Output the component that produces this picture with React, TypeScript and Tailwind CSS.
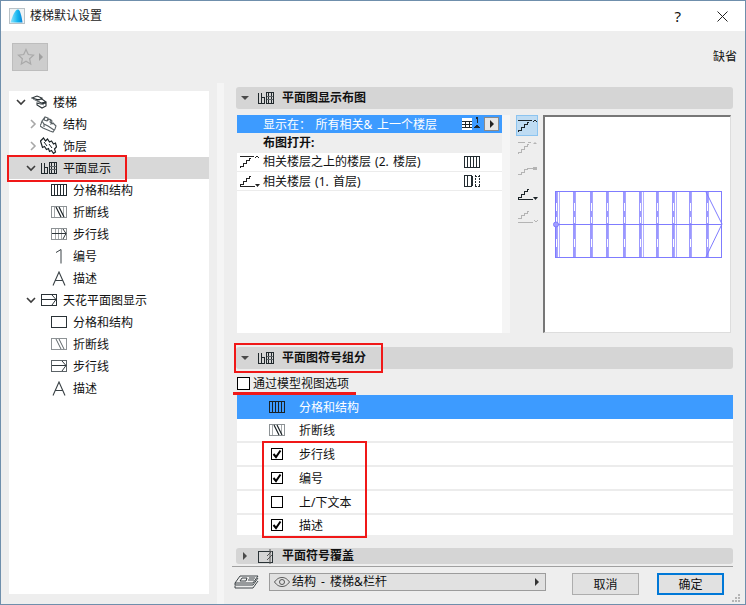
import React from "react";

// small pixel icons, drawn at the size they have in the dialog
const Svg = ({ w, h, className, children }: { w: number; h: number; className?: string; children: React.ReactNode }) => (
  <svg width={w} height={h} viewBox={`0 0 ${w} ${h}`} fill="none" shapeRendering="crispEdges" className={`shrink-0 ${className ?? ""}`}>
    {children}
  </svg>
);

const GridIcon = ({ color = "#222b30" }: { color?: string }) => (
  <Svg w={16} h={12}>
    <rect x="0.5" y="0.5" width="15" height="11" stroke={color} />
    <path d="M3.5 1v10M6.5 1v10M9.5 1v10M12.5 1v10" stroke={color} />
  </Svg>
);

const BreakIcon = () => (
  <Svg w={16} h={12}>
    <rect x="0.5" y="0.5" width="15" height="11" stroke="#8d9295" />
    <path d="M3.5 1v10M12.5 1v10" stroke="#a5a9ab" />
    <path d="M5 1l5 10M8 1l5 10" stroke="#1e2529" strokeWidth="1.2" shapeRendering="auto" />
  </Svg>
);

const WalkIcon = () => (
  <Svg w={16} h={12}>
    <rect x="0.5" y="0.5" width="15" height="11" stroke="#8d9295" />
    <path d="M4.5 1v10M7.5 1v10M10.5 1v10" stroke="#a5a9ab" />
    <path d="M1 5.5h14" stroke="#30383c" />
    <path d="M12 1l3 4.5L12 11" stroke="#30383c" shapeRendering="auto" />
  </Svg>
);

const NumberIcon = () => (
  <Svg w={16} h={16}>
    <path d="M5 4.5l5-3v14" stroke="#3a4246" shapeRendering="auto" />
  </Svg>
);

const LetterIcon = () => (
  <Svg w={16} h={15}>
    <path d="M2 14.5L8 1l6 13.5M4.5 9.5h7" stroke="#3a4246" strokeWidth="1.1" shapeRendering="auto" />
  </Svg>
);

const PlanIcon = () => (
  <Svg w={16} h={12}>
    <path d="M0.5 0.5v11h6V5.5h-3v6M3.5 0.5v5" stroke="#20282c" />
    <rect x="8.5" y="0.5" width="7" height="11" stroke="#20282c" />
    <path d="M10.5 1v10M13.5 1v10" stroke="#20282c" />
    <path d="M9 4.5h6M9 7.5h6" stroke="#5f6569" />
  </Svg>
);

const CeilingIcon = () => (
  <Svg w={16} h={12}>
    <rect x="0.5" y="0.5" width="15" height="11" stroke="#2a3236" />
    <path d="M1 5.5h14" stroke="#2a3236" />
    <path d="M11 1l4 4.5L11 11" stroke="#2a3236" shapeRendering="auto" />
  </Svg>
);

const PlainRect = () => (
  <Svg w={16} h={12}>
    <rect x="0.5" y="0.5" width="15" height="11" stroke="#2a3236" />
  </Svg>
);

const SimpleBreak = () => (
  <Svg w={16} h={12}>
    <rect x="0.5" y="0.5" width="15" height="11" stroke="#8d9295" />
    <path d="M5 1l5 10M8 1l5 10" stroke="#5c6367" shapeRendering="auto" />
  </Svg>
);

const SimpleWalk = () => (
  <Svg w={16} h={12}>
    <rect x="0.5" y="0.5" width="15" height="11" stroke="#5c6367" />
    <path d="M1 5.5h14" stroke="#30383c" />
    <path d="M11 1l4 4.5L11 11" stroke="#30383c" shapeRendering="auto" />
  </Svg>
);

const StairsRoot = () => (
  <Svg w={16} h={14}>
    <path d="M1 3l5-2 5 2-3 2zM5 5l6-1 4 3-5 1zM6 8l4 1 5-1v3l-4 2-5-3z" stroke="#2a3236" strokeWidth="1.1" shapeRendering="auto" />
    <path d="M2 4l6 3M8 8l5 2" stroke="#7a8084" shapeRendering="auto" />
  </Svg>
);

const StructureIcon = () => (
  <Svg w={17} h={17}>
    <path
      d="M1 8l1-3 3-4 3 1-1 3 2-2 3 2-1 3 2-1 3 3-1 3-2 3-3-1-7-3-3-2zM2 5l2 3 4 2 3 2 3 2M8 2l-1 3M5 1l-1 3 3 1M11 3l-1 3 3 2M4 8v3"
      stroke="#5a6266"
      strokeWidth="1.1"
      shapeRendering="auto"
    />
  </Svg>
);

const FinishIcon = () => (
  <Svg w={17} h={18}>
    <path
      d="M0.5 4l3-3 2 3 2-2 2 3 2-1 2 3 2-1 1 4-2 2 1 3-2 1.5-2-3-2 1-1-3-2 1-2-3-2 1z"
      stroke="#1a2226"
      strokeWidth="1.2"
      shapeRendering="auto"
    />
    <path d="M4 5l3 4M9 7l3 4" stroke="#1a2226" shapeRendering="auto" />
  </Svg>
);

const Chevron = ({ open, muted }: { open?: boolean; muted?: boolean }) => (
  <svg width="10" height="10" viewBox="0 0 10 10" fill="none" className="shrink-0">
    <path d={open ? "M1 3l4 4 4-4" : "M3 1l4 4-4 4"} stroke={muted ? "#a8a8a8" : "#3c3c3c"} strokeWidth="1.6" />
  </svg>
);

const Triangle = ({ dir = "down", color = "#4a4a4a" }: { dir?: "down" | "right"; color?: string }) => (
  <svg width="8" height="8" viewBox="0 0 8 8" className="shrink-0">
    <path d={dir === "down" ? "M0 2h8L4 6z" : "M2 0v8l4-4z"} fill={color} />
  </svg>
);

// the stair symbols in the small tool column and in the layout list
const StairTool = ({ variant, color }: { variant: "up" | "upMark" | "dot" | "down" | "downOpen"; color: string }) => (
  <Svg w={21} h={14}>
    {variant === "up" && <path d="M1 1.5h14M1 13v-2h3V8h3V5h3V3h2" stroke={color} />}
    {variant === "up" && <path d="M16 3l2-2 2 2" stroke={color} shapeRendering="auto" />}
    {variant === "upMark" && <path d="M1 1.5h7M11 1.5h3M1 13v-2h3V8h3V5h3V3h2" stroke={color} />}
    {variant === "upMark" && <path d="M16 3l2-2 2 2z" fill={color} shapeRendering="auto" />}
    {variant === "dot" && <path d="M1 10.5h3V8h3V5h3v-1h8" stroke={color} />}
    {variant === "dot" && <circle cx="18" cy="4.5" r="2" fill={color} />}
    {variant === "down" && <path d="M1 12v-2h3V7h3V4h3V2h2M1 12.5h15" stroke={color} />}
    {variant === "down" && <path d="M16 10h5l-2.5 3z" fill={color} shapeRendering="auto" />}
    {variant === "downOpen" && <path d="M1 9V8h3V5h3V3h3V1h2M1 12.5h15" stroke={color} />}
    {variant === "downOpen" && <path d="M17 10l2 2 2-2" stroke={color} shapeRendering="auto" />}
  </Svg>
);

const treeRows = [
  { label: "楼梯", pad: "pl-[7px]", chev: <Chevron open />, icon: <StairsRoot />, gap: "gap-[5px]", textGap: "ml-[6px]" },
  { label: "结构", pad: "pl-[19px]", chev: <Chevron muted />, icon: <StructureIcon />, gap: "gap-[2px]", textGap: "ml-[6px]" },
  { label: "饰层", pad: "pl-[19px]", chev: <Chevron muted />, icon: <FinishIcon />, gap: "gap-[2px]", textGap: "ml-[6px]" },
  { label: "平面显示", pad: "pl-[17px]", chev: <Chevron open />, icon: <PlanIcon />, gap: "gap-[5px]", textGap: "ml-[6px]", active: true },
  { label: "分格和结构", pad: "pl-[42px]", icon: <GridIcon />, textGap: "ml-[6px]" },
  { label: "折断线", pad: "pl-[42px]", icon: <BreakIcon />, textGap: "ml-[6px]" },
  { label: "步行线", pad: "pl-[42px]", icon: <WalkIcon />, textGap: "ml-[6px]" },
  { label: "编号", pad: "pl-[42px]", icon: <NumberIcon />, textGap: "ml-[6px]" },
  { label: "描述", pad: "pl-[42px]", icon: <LetterIcon />, textGap: "ml-[6px]" },
  { label: "天花平面图显示", pad: "pl-[17px]", chev: <Chevron open />, icon: <CeilingIcon />, gap: "gap-[5px]", textGap: "ml-[6px]" },
  { label: "分格和结构", pad: "pl-[42px]", icon: <PlainRect />, textGap: "ml-[6px]" },
  { label: "折断线", pad: "pl-[42px]", icon: <SimpleBreak />, textGap: "ml-[6px]" },
  { label: "步行线", pad: "pl-[42px]", icon: <SimpleWalk />, textGap: "ml-[6px]" },
  { label: "描述", pad: "pl-[42px]", icon: <LetterIcon />, textGap: "ml-[6px]" },
];

const SectionHeader = ({ title, icon, open = true, className }: { title: string; icon: React.ReactNode; open?: boolean; className?: string }) => (
  <div className={`flex items-center rounded-[3px] bg-[#d5d5d5] pl-[5px] ${className ?? ""}`}>
    <Triangle dir={open ? "down" : "right"} />
    <span className="ml-[9px] flex w-[16px] justify-center">{icon}</span>
    <span className="ml-[8px] font-bold">{title}</span>
  </div>
);

const CheckBox = ({ checked, className }: { checked?: boolean; className?: string }) => (
  <span className={`flex h-[12px] w-[12px] shrink-0 items-center justify-center border border-black bg-white ${className ?? ""}`}>
    {checked && (
      <svg width="10" height="10" viewBox="0 0 10 10" fill="none">
        <path d="M1.5 5l2.5 3 4.5-6.5" stroke="#000" strokeWidth="2" />
      </svg>
    )}
  </span>
);

const symbolRows = [
  { label: "步行线", check: true },
  { label: "编号", check: true },
  { label: "上/下文本", check: false },
];

const StairPreview = () => {
  const xs = [10, 28, 45, 61, 78, 94, 111, 127, 144, 161];
  return (
    <svg width="186" height="216" viewBox="0 0 186 216" fill="none" shapeRendering="crispEdges">
      {xs.map((x) => (
        <g key={x}>
          <rect x={x} y="74" width="2" height="67" fill="#9b98ff" />
          <path d={`M${x + 2.5} 74v67`} stroke="#a9a6ff" />
          <path d={`M${x + 1.5} 86v8M${x + 1.5} 100v6M${x + 1.5} 122v8`} stroke="#fff" />
          <path d={`M${x + 4.5} 74v67`} stroke={x === 10 || x === 94 || x === 127 ? "#b5b3ff" : "transparent"} />
        </g>
      ))}
      <rect x="10.5" y="74.5" width="166" height="66" stroke="#7f7cff" />
      <path d="M10 107.5h167" stroke="#7f7cff" />
      <path d="M161 75l16 32-16 33" stroke="#7f7cff" shapeRendering="auto" />
      <circle cx="11" cy="107.5" r="2.5" fill="#a09dff" stroke="#7f7cff" shapeRendering="auto" />
    </svg>
  );
};

export default function App() {
  return (
    <div className="relative flex h-[605px] w-[746px] flex-col overflow-hidden border border-[#6f8fac] bg-[#eeeeee] font-['Noto_Sans','Noto_Sans_CJK_SC',sans-serif] text-[12px] leading-[18px] text-[#111]">
      {/* title bar */}
      <div className="flex h-[30px] shrink-0 items-center bg-white pl-[8px]">
        <svg width="16" height="16" viewBox="0 0 16 16" className="shrink-0">
          <defs>
            <linearGradient id="logo" x1="0" y1="0" x2="1" y2="0">
              <stop offset="0" stopColor="#8fe6ff" />
              <stop offset="0.6" stopColor="#12b4ee" />
              <stop offset="1" stopColor="#0a84d8" />
            </linearGradient>
          </defs>
          <rect x="0.5" y="0.5" width="15" height="15" fill="#eef3f5" stroke="#b9c2c7" />
          <path d="M1.5 14.5C3.5 8 6 1.5 9 1.5c2 0 3.5 6 4.5 13z" fill="url(#logo)" />
        </svg>
        <span className="ml-[5px] text-[#222]">楼梯默认设置</span>
        <span className="ml-auto mr-[36px] text-[15px]">?</span>
        <svg width="11" height="11" viewBox="0 0 11 11" fill="none" className="mr-[17px]">
          <path d="M0.5 0.5l10 10M10.5 0.5l-10 10" stroke="#222" />
        </svg>
      </div>

      {/* favourites toolbar */}
      <div className="flex h-[52px] shrink-0 items-start justify-between pl-[11px] pr-[8px] pt-[12px]">
        <div className="flex h-[28px] w-[36px] items-center border border-[#bdbdbd] bg-[#cdcdcd] pl-[4px]">
          <svg width="18" height="18" viewBox="0 0 18 18" fill="none" className="shrink-0">
            <path d="M9 1.5l2.3 5 5.2.6-3.9 3.6 1.1 5.3L9 13.3 4.3 16l1.1-5.3L1.5 7.1l5.2-.6z" stroke="#a9a9a9" strokeWidth="1.2" />
          </svg>
          <span className="ml-[2px]">
            <Triangle dir="right" color="#a0a0a0" />
          </span>
        </div>
        <span className="mt-[5px]">缺省</span>
      </div>

      <div className="flex min-h-0 flex-1">
        {/* tree */}
        <div className="w-[216px] shrink-0 pb-[10px] pl-[8px] pr-[8px] pt-[8px]">
          <div className="h-full bg-white">
            {treeRows.map((row, i) => (
              <div key={i} className={`flex h-[22px] items-center ${row.pad} ${row.active ? "bg-[#d8d8d8]" : ""}`}>
                <span className={`flex items-center ${row.gap ?? ""}`}>
                  {row.chev}
                  {row.icon}
                </span>
                <span className={`pt-px ${row.textGap}`}>{row.label}</span>
              </div>
            ))}
          </div>
        </div>

        {/* splitter */}
        <div className="w-[7px] shrink-0 bg-[#f5f5f5]" />

        {/* settings */}
        <div className="flex min-w-0 flex-1 flex-col pl-[12px] pr-[12px] pt-[4px]">
          <SectionHeader title="平面图显示布图" icon={<PlanIcon />} className="h-[22px] shrink-0" />

          <div className="ml-px mt-[6px] flex h-[218px] shrink-0">
            <div className="flex w-[265px] shrink-0 flex-col bg-white">
              <div className="flex h-[18px] items-center bg-[#3d9bff] pl-[26px] text-white">
                <span className="pt-px [word-spacing:1.5px]">显示在： 所有相关&amp; 上一个楼层</span>
                <span className="ml-auto flex items-center">
                  <svg width="20" height="14" viewBox="0 0 20 14" fill="none" shapeRendering="crispEdges">
                    <rect x="1" y="1" width="10" height="12" fill="#fff" />
                    <path d="M1 4.5h10M1 7.5h10M1 10.5h10M4 4v7M8 4v7" stroke="#20282c" />
                    <path d="M13 11h6l-3-4z" fill="#20282c" />
                    <path d="M15 1.5l1-1v5" stroke="#20282c" />
                  </svg>
                  <span className="ml-[3px] mr-[3px] flex h-[14px] w-[15px] items-center justify-center border border-[#8a8a8a] bg-[#e6e6e6]">
                    <Triangle dir="right" color="#222" />
                  </span>
                </span>
              </div>
              <div className="flex h-[20px] items-center bg-[#eeeeee] pl-[26px] font-bold">布图打开:</div>
              <div className="flex h-[19px] items-center border-b border-[#ececec] pl-[2px]">
                <StairTool variant="up" color="#222" />
                <span className="ml-[3px] [word-spacing:1px]">相关楼层之上的楼层 (2. 楼层)</span>
                <span className="ml-auto mr-[22px]"><GridIcon /></span>
              </div>
              <div className="flex h-[19px] items-center border-b border-[#ececec] pl-[2px]">
                <StairTool variant="down" color="#222" />
                <span className="ml-[3px] pt-px [word-spacing:1px]">相关楼层 (1. 首层)</span>
                <span className="ml-auto mr-[22px]">
                  <Svg w={16} h={12}>
                    <rect x="0.5" y="0.5" width="7" height="11" stroke="#222b30" />
                    <path d="M3.5 1v10M8.5 1v10" stroke="#222b30" />
                    <path d="M11.5 0v12M15.5 0v12M11 1h5M11 11h5" stroke="#222b30" strokeDasharray="2 1" />
                  </Svg>
                </span>
              </div>
            </div>
            <div className="w-[8px] shrink-0 bg-[#f5f5f5]" />
            <div className="ml-[6px] flex w-[22px] shrink-0 flex-col items-center gap-[9px]">
              <div className="-mb-[4px] flex h-[21px] w-[22px] items-center justify-center border border-[#8cc4f0] bg-[#bfdcf3]">
                <StairTool variant="up" color="#1c2428" />
              </div>
              <StairTool variant="upMark" color="#b4b4b4" />
              <StairTool variant="dot" color="#b4b4b4" />
              <StairTool variant="down" color="#1c2428" />
              <StairTool variant="downOpen" color="#b4b4b4" />
            </div>
            <div className="ml-[5px] w-[188px] shrink-0 border-b border-l-2 border-r border-t-2 border-b-[#dddddd] border-l-[#777777] border-r-[#dddddd] border-t-[#777777] bg-white">
              <StairPreview />
            </div>
          </div>

          <SectionHeader title="平面图符号组分" icon={<PlanIcon />} className="mt-[14px] h-[22px] shrink-0" />

          <div className="ml-px mt-[7px] flex h-[14px] shrink-0 items-center">
            <CheckBox className="h-[13px] w-[13px] border-[#333]" />
            <span className="ml-[3px] pt-px">通过模型视图选项</span>
          </div>

          <div className="ml-px mt-[5px] flex h-[140px] shrink-0 flex-col bg-white">
            <div className="flex h-[24px] items-center bg-[#3d9bff] pl-[32px] text-white">
              <GridIcon color="#1a2226" />
              <span className="ml-[14px] pt-px">分格和结构</span>
            </div>
            <div className="flex h-[24px] items-center border-b-2 border-[#ececec] pl-[32px]">
              <BreakIcon />
              <span className="ml-[14px] pt-[2px]">折断线</span>
            </div>
            {symbolRows.map((row) => (
              <div key={row.label} className="flex h-[24px] items-center border-b-2 border-[#ececec] pl-[34px]">
                <CheckBox checked={row.check} />
                <span className="ml-[16px] pt-[2px]">{row.label}</span>
              </div>
            ))}
            <div className="flex h-[20px] items-center pl-[34px]">
              <CheckBox checked />
              <span className="ml-[16px] pt-[2px]">描述</span>
            </div>
          </div>

          <SectionHeader
            title="平面符号覆盖"
            open={false}
            className="mt-[13px] h-[16px] shrink-0"
            icon={
              <Svg w={16} h={15}>
                <rect x="0.5" y="2.5" width="14" height="11" stroke="#2a3236" />
                <path d="M14 2l-5 5M14 6l-5 5M12 0v15" stroke="#555" shapeRendering="auto" />
              </Svg>
            }
          />

          <div className="-ml-[4px] mt-[2px] h-px shrink-0 bg-[#a0a0a0]" />

          {/* footer */}
          <div className="-ml-[2px] mt-[6px] flex h-[22px] shrink-0 items-start">
            <Svg w={25} h={15} className="mt-[2px]">
              <path d="M1 8l5-7h18l-5 7zM8 3h5l-1 3H6zM15 3h6M14 5h6" stroke="#2a3236" strokeWidth="0.9" shapeRendering="auto" />
              <path d="M1 8v2h18l5-7M1 10.5v2.5h18l5-7" stroke="#2a3236" strokeWidth="0.9" shapeRendering="auto" />
            </Svg>
            <div className="ml-[10px] flex h-[18px] w-[277px] shrink-0 items-center border border-[#9c9c9c] bg-[#e1e1e1] pl-[4px] pr-[4px]">
              <svg width="16" height="10" viewBox="0 0 16 10" fill="none" className="shrink-0">
                <path d="M0.5 5C3 1.5 5.5 0.5 8 0.5S13 1.5 15.5 5C13 8.5 10.5 9.5 8 9.5S3 8.5 0.5 5z" stroke="#555" />
                <circle cx="8" cy="5" r="2.5" stroke="#555" />
              </svg>
              <span className="ml-[2px] [word-spacing:2px]">结构 - 楼梯&amp;栏杆</span>
              <span className="ml-auto"><Triangle dir="right" color="#333" /></span>
            </div>
            <button className="ml-[26px] flex h-[22px] w-[67px] shrink-0 items-center justify-center border border-[#adadad] bg-[#e1e1e1] pt-px">取消</button>
            <button className="ml-[18px] flex h-[22px] w-[67px] shrink-0 items-center justify-center border-2 border-[#0078d7] bg-[#e1e1e1] pt-px">确定</button>
          </div>
        </div>
      </div>

      {/* resize grip */}
      <svg width="10" height="9" viewBox="0 0 10 9" fill="#b5b5b5" className="absolute bottom-[1px] right-[4px]">
        <rect x="7" y="0" width="2" height="2" />
        <rect x="4" y="3" width="2" height="2" />
        <rect x="7" y="3" width="2" height="2" />
        <rect x="1" y="6" width="2" height="2" />
        <rect x="4" y="6" width="2" height="2" />
        <rect x="7" y="6" width="2" height="2" />
      </svg>

      {/* red annotations drawn on top of the screenshot */}
      <div className="absolute left-[6px] top-[154px] h-[27px] w-[120px] border-2 border-[#f01818]" />
      <div className="absolute left-[233px] top-[342px] h-[30px] w-[149px] border-2 border-[#f01818]" />
      <div className="absolute left-[232px] top-[391px] h-[3px] w-[123px] bg-[#f01818]" />
      <div className="absolute left-[261px] top-[440px] h-[97px] w-[105px] border-2 border-[#f01818]" />
    </div>
  );
}
